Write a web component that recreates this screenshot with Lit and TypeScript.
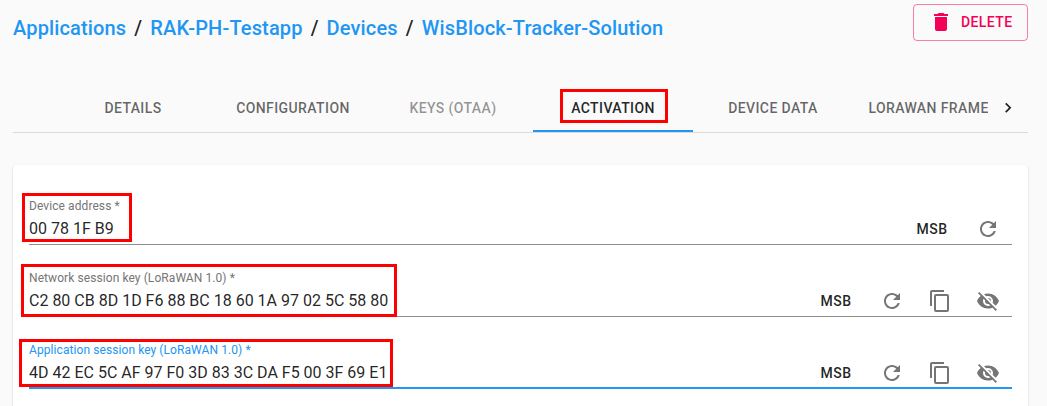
import { LitElement, html, css, svg, nothing } from "lit";
import { customElement, property } from "lit/decorators.js";
import { classMap } from "lit/directives/class-map.js";

const ICONS: Record<string, string> = {
  remove: "M19,4H15.5L14.5,3H9.5L8.5,4H5V6H19M6,19A2,2 0 0,0 8,21H16A2,2 0 0,0 18,19V7H6V19Z",
  refresh:
    "M17.65 6.35C16.2 4.9 14.21 4 12 4c-4.42 0-7.99 3.58-7.99 8s3.57 8 7.99 8c3.73 0 6.84-2.55 7.73-6h-2.08c-.82 2.33-3.04 4-5.65 4-3.31 0-6-2.69-6-6s2.69-6 6-6c1.66 0 3.14.69 4.22 1.78L13 11h7V4l-2.35 2.35z",
  copy: "M19,21H8V7H19M19,5H8A2,2 0 0,0 6,7V21A2,2 0 0,0 8,23H19A2,2 0 0,0 21,21V7A2,2 0 0,0 19,5M16,1H4A2,2 0 0,0 2,3V17H4V3H16V1Z",
  eyeOff:
    "M11.83,9L15,12.16C15,12.11 15,12.05 15,12A3,3 0 0,0 12,9C11.94,9 11.89,9 11.83,9M7.53,9.8L9.08,11.35C9.03,11.56 9,11.77 9,12A3,3 0 0,0 12,15C12.22,15 12.44,14.97 12.65,14.92L14.2,16.45C13.53,16.78 12.79,17 12,17A5,5 0 0,1 7,12C7,11.21 7.2,10.47 7.53,9.8M2,4.27L4.28,6.55L4.73,7C3.08,8.3 1.78,10 1,12C2.73,16.39 7,19.5 12,19.5C13.55,19.5 15.03,19.2 16.38,18.66L16.81,19.08L19.73,22L21,20.73L3.27,3M12,7A5,5 0 0,1 17,12C17,12.64 16.87,13.26 16.64,13.82L19.57,16.75C21.07,15.5 22.27,13.86 23,12C21.27,7.61 17,4.5 12,4.5C10.6,4.5 9.26,4.75 8,5.2L10.17,7.35C10.74,7.13 11.35,7 12,7Z",
  chevron: "M8.59 16.34l4.58-4.59-4.58-4.59L10 5.75l6 6-6 6z",
};

@customElement("ui-icon")
class UiIcon extends LitElement {
  @property() name = "";
  @property({ type: Number }) size = 24;
  static styles = css`
    :host { display: block; flex: none; }
    svg { display: block; fill: currentColor; }
  `;
  render() {
    return html`<svg width=${this.size} height=${this.size} viewBox="0 0 24 24">
      ${svg`<path d=${ICONS[this.name]}></path>`}
    </svg>`;
  }
}

@customElement("key-field")
class KeyField extends LitElement {
  @property() label = "";
  @property() value = "";
  @property({ type: Boolean }) secret = false;
  @property({ type: Boolean }) focused = false;
  static styles = css`
    :host { display: block; height: 72px; }
    .field { box-sizing: border-box; height: 48px; border-bottom: 1px solid #8e8e8e; display: flex; justify-content: space-between; }
    .field.focused { border-bottom: 2px solid #2196f3; }
    .label { padding-top: 1px; color: #757575; font-size: 12px; line-height: 16px; letter-spacing: 0.08px; white-space: nowrap; }
    .focused .label { color: #2196f3; }
    .value { margin-top: 5px; color: rgba(0, 0, 0, 0.87); font-size: 16px; line-height: 20px; white-space: nowrap; }
    .tools { display: flex; align-items: center; height: 48px; margin-top: 8px; }
    .order { width: 64px; text-align: center; color: rgba(0, 0, 0, 0.87); font-size: 14px; font-weight: 500; letter-spacing: 0.02857em; }
    .tool { width: 48px; height: 48px; display: grid; place-items: center; color: #757575; }
  `;
  private tool(name: string) {
    return html`<span class="tool"><ui-icon name=${name}></ui-icon></span>`;
  }
  render() {
    return html`<div class=${classMap({ field: true, focused: this.focused })}>
      <div>
        <div class="label">${this.label} *</div>
        <div class="value">${this.value}</div>
      </div>
      <div class="tools">
        <span class="order">MSB</span>
        ${this.tool("refresh")}
        ${this.secret ? html`${this.tool("copy")}${this.tool("eyeOff")}` : nothing}
      </div>
    </div>`;
  }
}

@customElement("app-root")
class AppRoot extends LitElement {
  static styles = css`
    :host { display: block; position: relative; box-sizing: border-box; height: 406px; padding: 0 19px 0 13px; overflow: hidden; background: #fafafa; color: rgba(0, 0, 0, 0.87); font-family: Roboto, "Liberation Sans", sans-serif; }
    .header { display: flex; justify-content: space-between; align-items: flex-start; height: 84px; }
    .crumbs { display: flex; gap: 8px; margin-top: 12px; font-size: 20px; font-weight: 500; line-height: 32px; letter-spacing: 0.0075em; white-space: nowrap; }
    .crumb { color: #2196f3; }
    .delete { box-sizing: border-box; width: 115px; height: 37px; margin-top: 4px; padding: 0 0 1px 15px; display: flex; align-items: center; gap: 8px; border: 1px solid rgba(245, 0, 87, 0.5); border-radius: 4px; color: #f50057; font-size: 14px; font-weight: 500; letter-spacing: 0.02857em; }
    .tabs { display: flex; height: 48px; border-bottom: 1px solid #dadada; padding-left: 40px; }
    .strip { display: flex; flex: 1; min-width: 0; overflow: hidden; }
    .tab { box-sizing: border-box; flex: 0 0 160px; text-align: center; color: rgba(0, 0, 0, 0.6); font-size: 14px; font-weight: 500; line-height: 48px; letter-spacing: 0.02857em; white-space: nowrap; }
    .tab.muted { color: rgba(0, 0, 0, 0.42); }
    .tab.active { color: rgba(0, 0, 0, 0.87); border-bottom: 2px solid #2196f3; }
    .next { width: 40px; display: grid; place-items: center; }
    .card { box-sizing: border-box; height: 300px; margin-top: 32px; padding: 32px 16px; border-radius: 4px; background: #fff; box-shadow: 0 2px 1px -1px rgba(0, 0, 0, 0.2), 0 1px 1px 0 rgba(0, 0, 0, 0.14), 0 1px 3px 0 rgba(0, 0, 0, 0.12); }
    .mark { position: absolute; box-sizing: border-box; border: 3px solid #f00; }
    .mark-tab { left: 560px; top: 89px; width: 108px; height: 34px; }
    .mark-address { left: 22px; top: 193px; width: 110px; height: 49px; }
    .mark-network { left: 21px; top: 264px; width: 376px; height: 53px; }
    .mark-application { left: 19px; top: 339px; width: 374px; height: 48px; }
  `;
  render() {
    const crumbs = ["Applications", "RAK-PH-Testapp", "Devices", "WisBlock-Tracker-Solution"];
    const tabs = ["DETAILS", "CONFIGURATION", "KEYS (OTAA)", "ACTIVATION", "DEVICE DATA", "LORAWAN FRAMES"];
    return html`
      <div class="header">
        <div class="crumbs">
          ${crumbs.map((c, i) => html`${i ? html`<span>/</span>` : nothing}<span class="crumb">${c}</span>`)}
        </div>
        <div class="delete"><ui-icon name="remove"></ui-icon>DELETE</div>
      </div>
      <div class="tabs">
        <div class="strip">
          ${tabs.map((t) => html`<div class=${classMap({ tab: true, active: t === "ACTIVATION", muted: t.startsWith("KEYS") })}>${t}</div>`)}
        </div>
        <div class="next"><ui-icon name="chevron" size="20"></ui-icon></div>
      </div>
      <div class="card">
        <key-field label="Device address" value="00 78 1F B9"></key-field>
        <key-field label="Network session key (LoRaWAN 1.0)" value="C2 80 CB 8D 1D F6 88 BC 18 60 1A 97 02 5C 58 80" secret></key-field>
        <key-field label="Application session key (LoRaWAN 1.0)" value="4D 42 EC 5C AF 97 F0 3D 83 3C DA F5 00 3F 69 E1" secret focused></key-field>
      </div>
      <div class="mark mark-tab"></div>
      <div class="mark mark-address"></div>
      <div class="mark mark-network"></div>
      <div class="mark mark-application"></div>
    `;
  }
}
